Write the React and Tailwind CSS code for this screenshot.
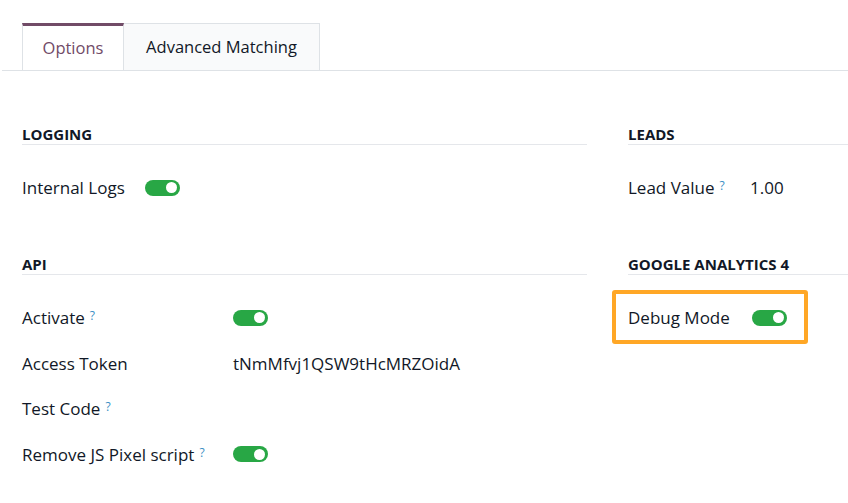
import React from "react";

function Toggle() {
  return (
    <span className="relative inline-block w-[35px] h-[16px] rounded-full bg-[#28a745]">
      <span className="absolute right-[3px] top-[2.5px] w-[11px] h-[11px] rounded-full bg-white" />
    </span>
  );
}

function Help() {
  return <sup className="ml-[5px] text-[12px] font-normal text-[#3b8fc4] relative -top-[4px]">?</sup>;
}

function Heading({ children }) {
  return (
    <div className="text-[15px] leading-[20px] font-bold uppercase text-[#111827] border-b border-[#e5e7eb]">
      {children}
    </div>
  );
}

function Row({ label, help, children, labelW }) {
  return (
    <div className="h-[45.5px] flex items-center">
      <div className={`${labelW} shrink-0 font-medium text-[#111827]`}>
        {label}
        {help && <Help />}
      </div>
      <div className="flex items-center text-[#111827]">{children}</div>
    </div>
  );
}

export default function App() {
  return (
    <div
      className="w-[848px] h-[503px] overflow-hidden bg-white text-[17px]"
      style={{ fontFamily: '"Open Sans", "Noto Sans", sans-serif' }}
    >
      <div className="pt-[23px] ml-[2px] flex border-b border-[#dee2e6] pl-[20px] text-[16.5px]">
        <div className="h-[47px] w-[102px] -mb-px bg-white border-t-[3px] border-t-[#714b67] border-l border-r border-[#dee2e6] flex items-center justify-center text-[#714b67]">
          Options
        </div>
        <div className="h-[47px] w-[196px] bg-[#f9fafb] border-t border-r border-[#dee2e6] flex items-center justify-center text-[#111827]">
          Advanced Matching
        </div>
      </div>

      <div className="pt-[53px] pl-[22px] flex gap-[41px]">
        <div className="w-[565px] shrink-0">
          <div className="mb-[43px]">
            <Heading>Logging</Heading>
            <div className="pt-[20px]">
              <div className="h-[45.5px] flex items-center gap-[20px]">
                <span className="font-medium text-[#111827]">Internal Logs</span>
                <Toggle />
              </div>
            </div>
          </div>
          <div>
            <Heading>API</Heading>
            <div className="pt-[20.5px]">
              <Row label="Activate" help labelW="w-[211px]">
                <Toggle />
              </Row>
              <Row label="Access Token" labelW="w-[211px]">
                <span>tNmMfvj1QSW9tHcMRZOidA</span>
              </Row>
              <Row label="Test Code" help labelW="w-[211px]" />
              <Row label="Remove JS Pixel script" help labelW="w-[211px]">
                <Toggle />
              </Row>
            </div>
          </div>
        </div>

        <div className="w-[565px] shrink-0">
          <div className="mb-[43px]">
            <Heading>Leads</Heading>
            <div className="pt-[20px]">
              <Row label="Lead Value" help labelW="w-[122px]">
                <span>1.00</span>
              </Row>
            </div>
          </div>
          <div>
            <Heading>Google Analytics 4</Heading>
            <div className="pt-[20.5px]">
              <div className="relative h-[45.5px] flex items-center gap-[22px]">
                <div className="absolute left-[-16px] top-[-5px] w-[196px] h-[54px] border-[4px] border-[#ffa726] rounded-[3px]" />
                <span className="font-medium text-[#111827]">Debug Mode</span>
                <Toggle />
              </div>
            </div>
          </div>
        </div>
      </div>
    </div>
  );
}
